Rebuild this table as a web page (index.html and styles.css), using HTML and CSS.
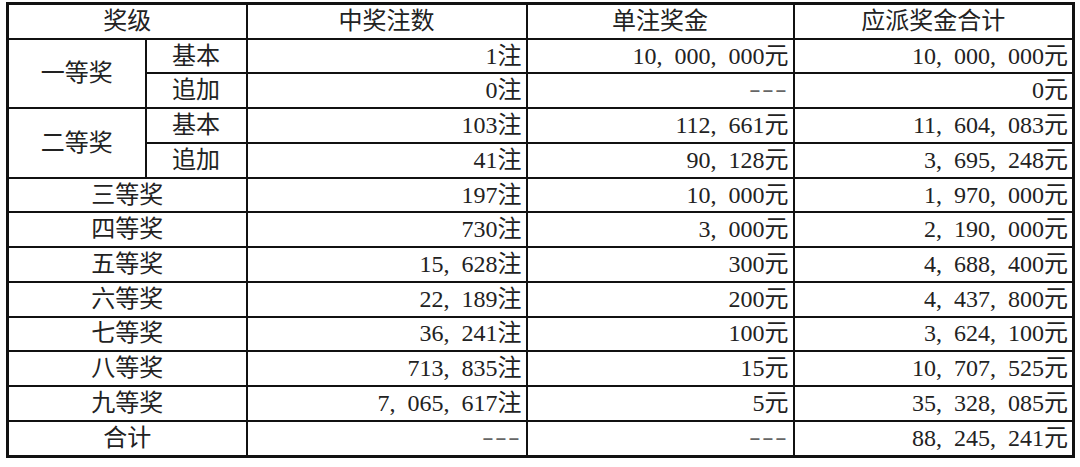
FILE: index.html
```html
<!DOCTYPE html>
<html lang="zh">
<head>
<meta charset="utf-8">
<link rel="stylesheet" href="styles.css">
</head>
<body>
<table class="prize">
  <colgroup>
    <col class="c1"><col class="c2"><col class="c3"><col class="c4"><col class="c5">
  </colgroup>
  <thead>
    <tr><th colspan="2">奖级</th><th>中奖注数</th><th>单注奖金</th><th>应派奖金合计</th></tr>
  </thead>
  <tbody>
    <tr><td class="lvl" rowspan="2">一等奖</td><td class="sub">基本</td><td class="num">1注</td><td class="num">10, 000, 000元</td><td class="num">10, 000, 000元</td></tr>
    <tr><td class="sub">追加</td><td class="num">0注</td><td class="num"><span class="dash">---</span></td><td class="num">0元</td></tr>
    <tr><td class="lvl" rowspan="2">二等奖</td><td class="sub">基本</td><td class="num">103注</td><td class="num">112, 661元</td><td class="num">11, 604, 083元</td></tr>
    <tr><td class="sub">追加</td><td class="num">41注</td><td class="num">90, 128元</td><td class="num">3, 695, 248元</td></tr>
    <tr><td class="lvl" colspan="2">三等奖</td><td class="num">197注</td><td class="num">10, 000元</td><td class="num">1, 970, 000元</td></tr>
    <tr><td class="lvl" colspan="2">四等奖</td><td class="num">730注</td><td class="num">3, 000元</td><td class="num">2, 190, 000元</td></tr>
    <tr><td class="lvl" colspan="2">五等奖</td><td class="num">15, 628注</td><td class="num">300元</td><td class="num">4, 688, 400元</td></tr>
    <tr><td class="lvl" colspan="2">六等奖</td><td class="num">22, 189注</td><td class="num">200元</td><td class="num">4, 437, 800元</td></tr>
    <tr><td class="lvl" colspan="2">七等奖</td><td class="num">36, 241注</td><td class="num">100元</td><td class="num">3, 624, 100元</td></tr>
    <tr><td class="lvl" colspan="2">八等奖</td><td class="num">713, 835注</td><td class="num">15元</td><td class="num">10, 707, 525元</td></tr>
    <tr><td class="lvl" colspan="2">九等奖</td><td class="num">7, 065, 617注</td><td class="num">5元</td><td class="num">35, 328, 085元</td></tr>
    <tr><td class="lvl" colspan="2">合计</td><td class="num"><span class="dash">---</span></td><td class="num"><span class="dash">---</span></td><td class="num">88, 245, 241元</td></tr>
  </tbody>
</table>
</body>
</html>
```
FILE: styles.css
```css
html, body {
  margin: 0;
  padding: 0;
  background: #ffffff;
}
body {
  padding: 2px 0 0 6px;
}
.prize {
  border-collapse: collapse;
  table-layout: fixed;
  width: 1066px;
  border: 3px solid #111;
  font-family: "Liberation Serif", "Noto Sans CJK SC", serif;
  font-size: 24px;
  color: #222;
  word-spacing: 6px;
}
.c1 { width: 138px; }
.c2 { width: 101px; }
.c3 { width: 280px; }
.c4 { width: 267px; }
.c5 { width: 280px; }
.prize th,
.prize td {
  border: 2px solid #111;
  height: 32.7px;
  padding: 0 4px;
  line-height: 31px;
  white-space: nowrap;
  overflow: hidden;
}
.prize th {
  font-weight: normal;
  text-align: center;
}
.lvl, .sub {
  text-align: center;
}
.num {
  text-align: right;
}
.dash {
  display: inline-block;
  font-family: "Liberation Mono", monospace;
  font-size: 22px;
  color: #666;
  word-spacing: 0;
  letter-spacing: -4.5px;
  transform: scaleX(1.5);
  transform-origin: right center;
  margin-right: 4px;
}
```
